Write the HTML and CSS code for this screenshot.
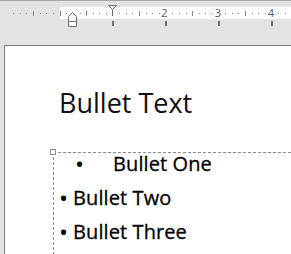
FILE: index.html
```html
<!DOCTYPE html>
<html>
<head>
<meta charset="utf-8">
<link rel="stylesheet" href="styles.css">
</head>
<body>
<div class="ruler">
<svg class="ruler-svg" width="291" height="45" viewBox="0 0 291 45" xmlns="http://www.w3.org/2000/svg">
  <rect x="0" y="0" width="291" height="1" fill="#a6a6a6"/>
  <rect x="60" y="7" width="231" height="12" fill="#ffffff"/>
  <g fill="#8a8a8a">
    <rect x="13" y="13" width="1" height="1"/>
    <rect x="20" y="13" width="1" height="1"/>
    <rect x="26" y="13" width="1" height="1"/>
    <rect x="33" y="11" width="1" height="5"/>
    <rect x="40" y="13" width="1" height="1"/>
    <rect x="46" y="13" width="1" height="1"/>
    <rect x="53" y="13" width="1" height="1"/>
    <rect x="60" y="11" width="1" height="5"/>
    <rect x="66" y="13" width="1" height="1"/>
    <rect x="80" y="13" width="1" height="1"/>
    <rect x="86" y="11" width="1" height="5"/>
    <rect x="93" y="13" width="1" height="1"/>
    <rect x="99" y="13" width="1" height="1"/>
    <rect x="106" y="13" width="1" height="1"/>
    <rect x="119" y="13" width="1" height="1"/>
    <rect x="126" y="13" width="1" height="1"/>
    <rect x="132" y="13" width="1" height="1"/>
    <rect x="139" y="11" width="1" height="5"/>
    <rect x="146" y="13" width="1" height="1"/>
    <rect x="152" y="13" width="1" height="1"/>
    <rect x="159" y="13" width="1" height="1"/>
    <rect x="172" y="13" width="1" height="1"/>
    <rect x="179" y="13" width="1" height="1"/>
    <rect x="186" y="13" width="1" height="1"/>
    <rect x="192" y="11" width="1" height="5"/>
    <rect x="199" y="13" width="1" height="1"/>
    <rect x="205" y="13" width="1" height="1"/>
    <rect x="212" y="13" width="1" height="1"/>
    <rect x="225" y="13" width="1" height="1"/>
    <rect x="232" y="13" width="1" height="1"/>
    <rect x="238" y="13" width="1" height="1"/>
    <rect x="245" y="11" width="1" height="5"/>
    <rect x="252" y="13" width="1" height="1"/>
    <rect x="258" y="13" width="1" height="1"/>
    <rect x="265" y="13" width="1" height="1"/>
    <rect x="278" y="13" width="1" height="1"/>
    <rect x="285" y="13" width="1" height="1"/>
  </g>
  <g class="ruler-num" fill="#5a5a5a">
    <text x="164.5" y="17" text-anchor="middle">2</text>
    <text x="218" y="17" text-anchor="middle">3</text>
    <text x="271" y="17" text-anchor="middle">4</text>
  </g>
  <g fill="#6e6e6e">
    <rect x="112" y="21" width="2" height="5"/>
    <rect x="165" y="21" width="2" height="5"/>
    <rect x="218" y="21" width="2" height="5"/>
    <rect x="271" y="21" width="2" height="5"/>
  </g>
  <g fill="#ffffff" stroke="#6e6e6e" stroke-width="1">
    <path d="M108.5 5.5 H116.5 L112.5 9.5 Z"/>
    <path d="M112.5 9.5 V16" fill="none"/>
    <path d="M68.5 16.5 L72.5 12.5 L76.5 16.5 V26.5 H68.5 Z"/>
    <path d="M68.5 21.5 H76.5" fill="none"/>
  </g>
</svg>
</div>
<div class="slide">
  <h1 class="title">Bullet Text</h1>
  <div class="textbox">
    <span class="handle"></span>
    <ul class="bullets">
      <li class="item item-first"><span class="bullet">•</span><span class="label">Bullet One</span></li>
      <li class="item"><span class="bullet">•</span><span class="label">Bullet Two</span></li>
      <li class="item"><span class="bullet">•</span><span class="label">Bullet Three</span></li>
    </ul>
  </div>
</div>
</body>
</html>
```

FILE: styles.css
```css
html, body {
  margin: 0;
  padding: 0;
}
body {
  width: 291px;
  height: 254px;
  overflow: hidden;
  background: #e3e3e3;
  font-family: "Open Sans", "Noto Sans", sans-serif;
}
.ruler {
  height: 45px;
}
.ruler-svg {
  display: block;
}
.ruler-num {
  font-family: "Open Sans", "Noto Sans", sans-serif;
  font-size: 11px;
}
.slide {
  margin-left: 4px;
  height: 209px;
  box-sizing: border-box;
  border-left: 1px solid #7f7f7f;
  border-top: 1px solid #7f7f7f;
  background: #ffffff;
  overflow: hidden;
}
.title {
  margin: 38px 0 0 54px;
  font-size: 27px;
  font-weight: 400;
  line-height: 37px;
  color: #111;
}
.textbox {
  position: relative;
  margin: 31px 0 0 48px;
  padding: 1px 0 0 1px;
  height: 200px;
  background:
    repeating-linear-gradient(90deg, #8c8c8c 0 3px, transparent 3px 5px) top left / 100% 1px no-repeat,
    repeating-linear-gradient(180deg, #8c8c8c 0 3px, transparent 3px 5px) top left / 1px 100% no-repeat;
}
.handle {
  position: absolute;
  left: -3px;
  top: -3px;
  width: 4px;
  height: 4px;
  border: 1px solid #8c8c8c;
  background: #fff;
}
.bullets {
  list-style: none;
  margin: 0;
  padding: 0;
}
.item {
  display: flex;
  align-items: flex-start;
  font-size: 20px;
  line-height: 22px;
  margin-bottom: 12px;
  color: #000;
}
.label {
  -webkit-text-stroke: 0.3px #000;
  letter-spacing: 0.1px;
}
.bullet {
  display: block;
  width: 14px;
  margin-left: 5px;
  font-size: 24px;
  line-height: 22px;
}
.item-first .bullet {
  width: 38px;
  margin-left: 21px;
}
```
